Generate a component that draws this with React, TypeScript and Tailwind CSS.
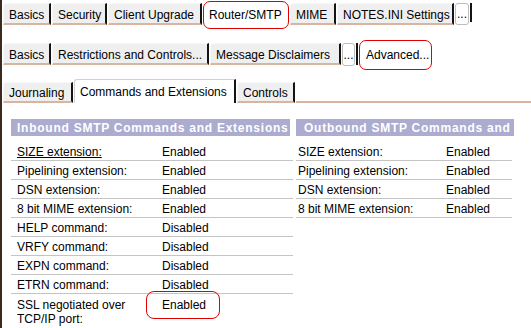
import React from "react";

type TabProps = { label: string; w: string; h?: string };

function Tab({ label, w, h = "h-[22px]" }: TabProps) {
  return (
    <div
      className={`${w} ${h} shrink-0 flex items-center pl-[5px] pt-[2px] bg-[#efefef] border-t border-l border-t-[#f8f8f8] border-l-[#f8f8f8] border-r-2 border-r-[#141414] border-b-2 border-b-[#d7b59f] rounded-tl-[3px] whitespace-nowrap overflow-hidden`}
    >
      {label}
    </div>
  );
}

function Dots({ w, h }: { w: string; h: string }) {
  return (
    <div
      className={`${w} ${h} shrink-0 flex items-center justify-center bg-white border border-[#bdbdbd] rounded-[3px] whitespace-nowrap overflow-hidden`}
    >
      ...
    </div>
  );
}

const left: [string, string][] = [
  ["SIZE extension:", "Enabled"],
  ["Pipelining extension:", "Enabled"],
  ["DSN extension:", "Enabled"],
  ["8 bit MIME extension:", "Enabled"],
  ["HELP command:", "Disabled"],
  ["VRFY command:", "Disabled"],
  ["EXPN command:", "Disabled"],
  ["ETRN command:", "Disabled"],
];

const right: [string, string][] = [
  ["SIZE extension:", "Enabled"],
  ["Pipelining extension:", "Enabled"],
  ["DSN extension:", "Enabled"],
  ["8 bit MIME extension:", "Enabled"],
];

export default function App() {
  return (
    <div className="w-[531px] h-[328px] overflow-hidden bg-white border-l-2 border-l-[#3b2b1e] font-['Liberation_Sans',Arial,sans-serif] text-[12px] text-black leading-none">
      {/* Row 1 */}
      <div className="flex items-start h-[22px] mt-[3px] ml-[1px] gap-[1px]">
        <Tab label="Basics" w="w-[48px]" />
        <Tab label="Security" w="w-[55px]" />
        <Tab label="Client Upgrade" w="w-[94px]" />
        <div className="shrink-0 -mt-[2px] h-[28px] w-[86px] bg-white border border-[#e00000] rounded-[7px] flex items-center pl-[5px] whitespace-nowrap">
          Router/SMTP
        </div>
        <Tab label="MIME" w="w-[46px]" />
        <Tab label="NOTES.INI Settings" w="w-[117px]" />
        <Dots w="w-[14px]" h="h-[22px]" />
        <div className="shrink-0 w-[2px] h-[19px] bg-[#141414]" />
      </div>

      {/* Row 2 */}
      <div className="flex items-start h-[22px] mt-[18px] ml-[1px] gap-[1px]">
        <Tab label="Basics" w="w-[48px]" />
        <Tab label="Restrictions and Controls..." w="w-[157px]" />
        <Tab label="Message Disclaimers" w="w-[131px]" />
        <Dots w="w-[13px]" h="h-[23px]" />
        <div className="shrink-0 w-[2px] h-[22px] bg-[#141414]" />
        <div className="shrink-0 -mt-[3px] h-[30px] w-[73px] bg-white border border-[#e00000] rounded-[7px] flex items-center pl-[6px] whitespace-nowrap">
          Advanced...
        </div>
      </div>

      {/* Row 3 */}
      <div className="flex items-end h-[24px] mt-[14px] ml-[1px] gap-[1px]">
        <Tab label="Journaling" w="w-[70px]" h="h-[21px]" />
        <div className="shrink-0 w-[162px] h-[24px] flex items-center pl-[5px] pt-[1px] bg-white border-t border-l border-[#d0d0d0] border-r-2 border-r-[#141414] rounded-tl-[3px] whitespace-nowrap">
          Commands and Extensions
        </div>
        <Tab label="Controls" w="w-[58px]" h="h-[21px]" />
        <div className="flex-1 h-[2px] bg-[#d7b59f]" />
      </div>

      {/* Table */}
      <div className="flex mt-[16px] ml-[9px]">
        <div className="w-[285px] shrink-0">
          <div className="w-[279px] h-[17px] bg-[#acacd0] text-white font-bold tracking-[0.75px] pl-[6px] flex items-center whitespace-nowrap overflow-hidden">
            Inbound SMTP Commands and Extensions
          </div>
          <div className="mt-[6px] w-[282px]">
            {left.map(([l, v], i) => (
              <div
                key={l}
                className="h-[19px] flex items-center pt-[1px] border-b border-b-[#c4c4c4]"
              >
                <div className={`w-[151px] pl-[6px] ${i === 0 ? "underline" : ""}`}>{l}</div>
                <div>{v}</div>
              </div>
            ))}
            <div className="relative flex items-start pt-[4px] leading-[14px]">
              <div className="w-[151px] pl-[6px]">
                SSL negotiated over
                <br />
                TCP/IP port:
              </div>
              <div>Enabled</div>
              <div className="absolute left-[135px] top-[-3px] w-[74px] h-[28px] border border-[#e00000] rounded-[8px]" />
            </div>
          </div>
        </div>
        <div className="w-[218px] shrink-0">
          <div className="w-[218px] h-[17px] bg-[#acacd0] text-white font-bold tracking-[0.75px] pl-[8px] flex items-center whitespace-nowrap overflow-hidden">
            Outbound SMTP Commands and
          </div>
          <div className="mt-[6px] w-[216px]">
            {right.map(([l, v]) => (
              <div
                key={l}
                className="h-[19px] flex items-center pt-[1px] border-b border-b-[#c4c4c4]"
              >
                <div className="w-[150px] pl-[2px]">{l}</div>
                <div>{v}</div>
              </div>
            ))}
          </div>
        </div>
      </div>
    </div>
  );
}
